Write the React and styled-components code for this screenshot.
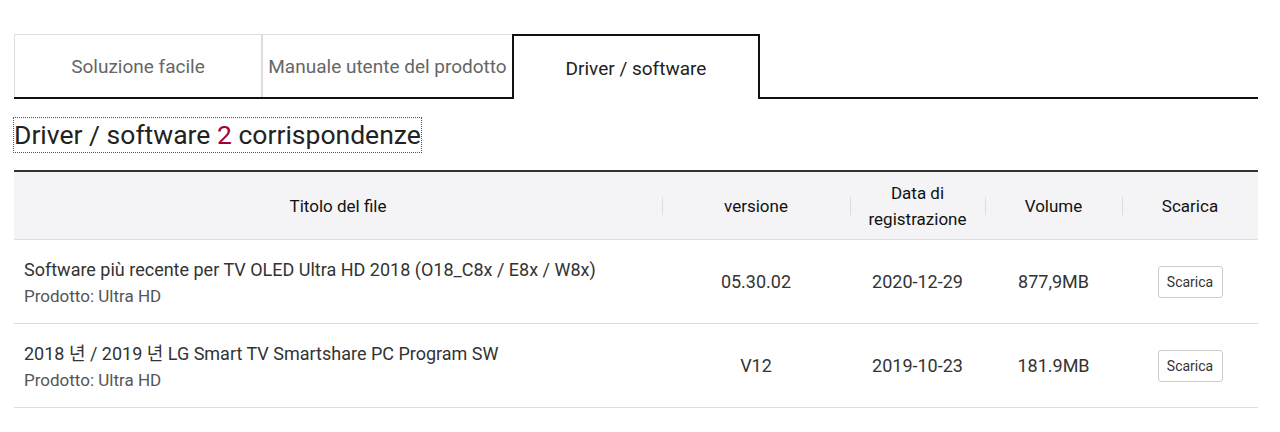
import React from 'react';
import styled, { createGlobalStyle } from 'styled-components';

const GlobalStyle = createGlobalStyle`
  * { box-sizing: border-box; }
  body {
    margin: 0;
    background: #fff;
    font-family: Roboto, "Noto Sans CJK KR", sans-serif;
    color: #333;
  }
`;

const cols = '648px 188px 135px 137px 136px';

const S = {
  Wrapper: styled.section`
    padding: 34px 22px 0 14px;
  `,
  Tabs: styled.div`
    display: flex;
    height: 65px;
    border-bottom: 2px solid #111;
  `,
  Tab: styled.div`
    width: ${p => p.w}px;
    display: flex;
    align-items: center;
    justify-content: center;
    font-size: 19px;
    white-space: nowrap;
    color: ${p => (p.active ? '#222' : '#666')};
    background: #fff;
    border: ${p => (p.active ? '2px solid #111' : '1px solid #ddd')};
    border-bottom: none;
    border-right: ${p => (p.last ? 'none' : '')};
    margin-bottom: ${p => (p.active ? '-2px' : '0')};
    padding-top: ${p => (p.active ? '2px' : '0')};
  `,
  Heading: styled.h2`
    display: inline-block;
    margin: 19px 0 18px;
    font-size: 26.5px;
    font-weight: 400;
    line-height: 34px;
    color: #222;
    outline: 1px dotted #555;
  `,
  Count: styled.span`
    color: #a50034;
  `,
  Table: styled.div`
    border-top: 2px solid #333;
  `,
  HeadRow: styled.div`
    display: grid;
    grid-template-columns: ${cols};
    height: 68px;
    background: #f4f4f6;
    border-bottom: 1px solid #ddd;
    align-items: center;
  `,
  HeadCell: styled.div`
    position: relative;
    text-align: center;
    font-size: 17px;
    line-height: 26px;
    color: #111;
    &:not(:first-child)::before {
      content: '';
      position: absolute;
      left: 0;
      top: 50%;
      height: 18px;
      margin-top: -9px;
      border-left: 1px solid #ddd;
    }
  `,
  Row: styled.div`
    display: grid;
    grid-template-columns: ${cols};
    height: 84px;
    align-items: center;
    border-bottom: 1px solid #ddd;
  `,
  TitleCell: styled.div`
    padding-left: 10px;
    padding-top: 2px;
  `,
  FileName: styled.div`
    font-size: 18px;
    line-height: 27px;
    color: #333;
  `,
  Product: styled.div`
    font-size: 17px;
    line-height: 26px;
    color: #555;
  `,
  Cell: styled.div`
    text-align: center;
    font-size: 18px;
    color: #333;
  `,
  Button: styled.button`
    width: 65px;
    height: 32px;
    margin: 0 auto;
    display: block;
    background: #fff;
    border: 1px solid #ccc;
    border-radius: 3px;
    font-family: inherit;
    font-size: 14px;
    color: #333;
  `,
};

const files = [
  {
    title: 'Software più recente per TV OLED Ultra HD 2018 (O18_C8x / E8x / W8x)',
    version: '05.30.02',
    date: '2020-12-29',
    size: '877,9MB',
  },
  {
    title: '2018 년 / 2019 년 LG Smart TV Smartshare PC Program SW',
    version: 'V12',
    date: '2019-10-23',
    size: '181.9MB',
  },
];

const App = () => (
  <S.Wrapper>
    <GlobalStyle />
    <S.Tabs>
      <S.Tab w={248}>Soluzione facile</S.Tab>
      <S.Tab w={250} last>Manuale utente del prodotto</S.Tab>
      <S.Tab w={248} active>Driver / software</S.Tab>
    </S.Tabs>
    <S.Heading>
      Driver / software <S.Count>2</S.Count> corrispondenze
    </S.Heading>
    <S.Table>
      <S.HeadRow>
        <S.HeadCell>Titolo del file</S.HeadCell>
        <S.HeadCell>versione</S.HeadCell>
        <S.HeadCell>Data di<br />registrazione</S.HeadCell>
        <S.HeadCell>Volume</S.HeadCell>
        <S.HeadCell>Scarica</S.HeadCell>
      </S.HeadRow>
      {files.map(f => (
        <S.Row key={f.date}>
          <S.TitleCell>
            <S.FileName>{f.title}</S.FileName>
            <S.Product>Prodotto: Ultra HD</S.Product>
          </S.TitleCell>
          <S.Cell>{f.version}</S.Cell>
          <S.Cell>{f.date}</S.Cell>
          <S.Cell>{f.size}</S.Cell>
          <S.Cell>
            <S.Button>Scarica</S.Button>
          </S.Cell>
        </S.Row>
      ))}
    </S.Table>
  </S.Wrapper>
);

export default App;
